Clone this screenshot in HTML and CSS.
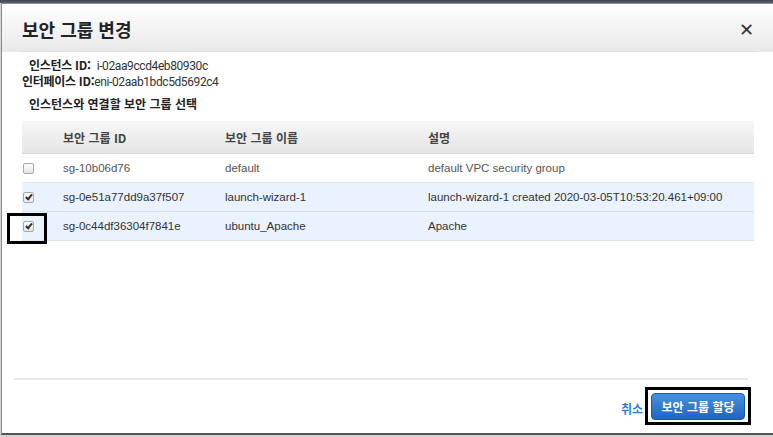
FILE: index.html
```html
<!DOCTYPE html>
<html lang="ko">
<head>
    <meta charset="UTF-8">
    <title>보안 그룹 변경</title>
    <link rel="stylesheet" href="styles.css">
</head>
<body>
    <div class="modal">
        <div class="modal-header">
            <div class="header-bar">
                <h2 class="modal-title">보안 그룹 변경</h2>
                <span class="close-btn">&#x2715;</span>
            </div>
        </div>

        <div class="modal-body">
            <div class="info">
                <div class="info-line indent"><b>인스턴스 ID:</b>&nbsp; <span class="value">i-02aa9ccd4eb80930c</span></div>
                <div class="info-line"><b>인터페이스 ID:</b><span class="value">eni-02aab1bdc5d5692c4</span></div>
                <div class="info-title indent">인스턴스와 연결할 보안 그룹 선택</div>
            </div>

            <table class="sg-table">
                <thead>
                    <tr>
                        <th class="col-check"></th>
                        <th class="col-id">보안 그룹 ID</th>
                        <th class="col-name">보안 그룹 이름</th>
                        <th>설명</th>
                    </tr>
                </thead>
                <tbody id="sgRows"></tbody>
            </table>
        </div>

        <div class="modal-footer">
            <a class="cancel-link">취소</a>
            <span class="btn-wrap">
                <button class="btn-primary">보안 그룹 할당</button>
                <span class="mark"></span>
            </span>
        </div>
    </div>

    <script>
        // 보안 그룹 목록
        const groups = [
            { id: 'sg-10b06d76', name: 'default', desc: 'default VPC security group', checked: false },
            { id: 'sg-0e51a77dd9a37f507', name: 'launch-wizard-1', desc: 'launch-wizard-1 created 2020-03-05T10:53:20.461+09:00', checked: true },
            { id: 'sg-0c44df36304f7841e', name: 'ubuntu_Apache', desc: 'Apache', checked: true, marked: true }
        ];

        const rows = document.getElementById('sgRows');
        groups.forEach(g => {
            const tr = document.createElement('tr');
            if (g.checked) tr.className = 'selected';
            tr.innerHTML = `
                <td class="col-check">
                    <span class="checkbox ${g.checked ? 'on' : ''}"></span>
                    ${g.marked ? '<span class="mark"></span>' : ''}
                </td>
                <td>${g.id}</td>
                <td>${g.name}</td>
                <td>${g.desc}</td>
            `;
            rows.appendChild(tr);
        });
    </script>
</body>
</html>
```

FILE: styles.css
```css
html, body {
    margin: 0;
    height: 100%;
    overflow: hidden;
}

body {
    background: linear-gradient(#3d4756 0, #5a6270 3px, #d4d4d4 3px);
    padding-top: 3px;
    font-family: "Liberation Sans", Arial, "Noto Sans CJK KR", sans-serif;
    color: #444;
    box-sizing: border-box;
}

.modal {
    width: 772px;
    height: 429px;
    margin-left: 1px;
    background: #fff;
    border: 1px solid #8c8c8c;
    border-right: none;
    border-bottom: 2px solid #555;
    display: flex;
    flex-direction: column;
}

.modal-header {
    height: 48px;
    padding-left: 20px;
    background: linear-gradient(#ffffff, #e9e9e9);
}

.header-bar {
    height: 47px;
    margin-right: 18px;
    padding-right: 2px;
    border-bottom: 1px solid #dedede;
    display: flex;
    align-items: center;
    justify-content: space-between;
}

.modal-title {
    margin: 0;
    font-family: "Noto Sans CJK KR", sans-serif;
    font-size: 18px;
    font-weight: bold;
    color: #222;
    padding-top: 2px;
}

.close-btn {
    font-family: "DejaVu Sans", sans-serif;
    font-size: 18px;
    font-weight: bold;
    color: #333;
    padding-top: 4px;
}

.modal-body {
    flex: 1;
    padding-left: 20px;
}

.info {
    padding-top: 5px;
    font-family: "Noto Sans CJK KR", sans-serif;
    font-size: 12px;
    color: #222;
}

.info-line {
    height: 16px;
    line-height: 16px;
    letter-spacing: -0.3px;
}

.info-line b {
    font-weight: bold;
}

.info-line .value {
    font-family: Roboto, "Liberation Sans", sans-serif;
    font-size: 12px;
    letter-spacing: -0.4px;
    color: #333;
}

.indent {
    padding-left: 7px;
}

.info-title {
    margin-top: 7px;
    height: 16px;
    line-height: 16px;
    font-weight: bold;
}

.sg-table {
    margin-top: 9px;
    width: 732px;
    border-collapse: collapse;
    table-layout: fixed;
    font-size: 11.5px;
}

.sg-table th {
    height: 32px;
    padding: 0 0 0 11px;
    text-align: left;
    font-family: "Noto Sans CJK KR", sans-serif;
    font-size: 12px;
    font-weight: bold;
    color: #444;
    background: linear-gradient(#f7f7f7, #e5e5e5);
    border-bottom: 1px solid #d6d6d6;
}

.sg-table td {
    height: 28px;
    padding: 0 0 0 11px;
    color: #555;
    border-bottom: 1px solid #e3e8ee;
    white-space: nowrap;
}

.sg-table tr.selected td {
    background: #eaf2fd;
    color: #333;
    border-bottom-color: #d9e3ef;
}

.sg-table .col-check {
    width: 29px;
    padding-left: 1px;
    position: relative;
}

.sg-table .col-id {
    width: 151px;
}

.sg-table .col-name {
    width: 192px;
}

.checkbox {
    display: block;
    width: 9px;
    height: 9px;
    border: 1px solid #a9a9a9;
    border-radius: 2px;
    background: linear-gradient(#fdfdfd, #e4e4e4);
    position: relative;
}

.checkbox.on::after {
    content: "";
    position: absolute;
    left: 3px;
    top: 0px;
    width: 2px;
    height: 5px;
    border: solid #333;
    border-width: 0 2px 2px 0;
    transform: rotate(40deg);
}

.col-check .mark {
    position: absolute;
    left: -15px;
    top: 1px;
    width: 34px;
    height: 25px;
    border: 3px solid #000;
}

.modal-footer {
    margin: 0 26px 0 12px;
    padding: 13px 3px 13px 0;
    border-top: 2px solid #e8e8e8;
    display: flex;
    justify-content: flex-end;
    align-items: center;
    gap: 8px;
}

.cancel-link {
    font-family: "Noto Sans CJK KR", sans-serif;
    font-size: 12px;
    font-weight: bold;
    color: #2f7fd6;
    padding-top: 3px;
}

.btn-wrap {
    position: relative;
    display: inline-block;
}

.btn-primary {
    display: block;
    width: 94px;
    height: 27px;
    font-family: "Noto Sans CJK KR", sans-serif;
    font-size: 12px;
    font-weight: bold;
    color: #fff;
    background: linear-gradient(#4a90e0, #1d65c1);
    border: 1px solid #1a58a8;
    border-radius: 4px;
    padding: 0;
}

.btn-wrap .mark {
    position: absolute;
    left: -6px;
    top: -6px;
    right: -6px;
    bottom: -5px;
    border: 3px solid #000;
}
```
